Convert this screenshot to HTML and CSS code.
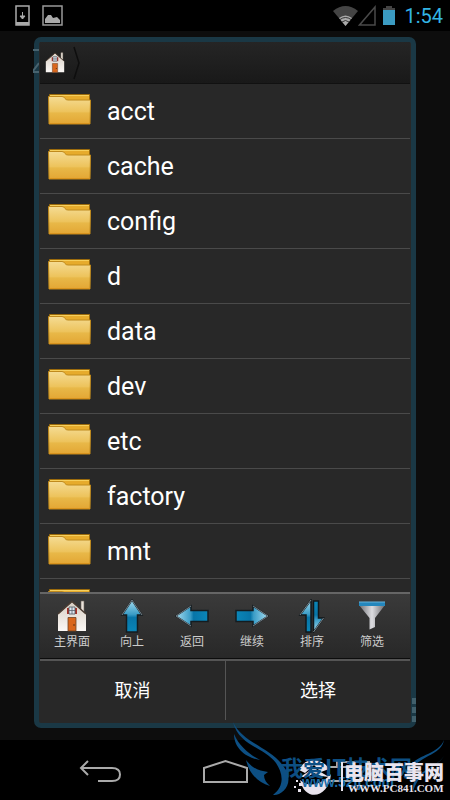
FILE: index.html
```html
<!DOCTYPE html>
<html lang="zh-CN">
<head>
    <meta charset="UTF-8">
    <meta name="viewport" content="width=device-width, initial-scale=1.0">
    <title>File</title>
    <link rel="stylesheet" href="styles.css">
</head>
<body>
    <!-- shared shapes and gradients -->
    <svg class="defs" width="0" height="0" aria-hidden="true">
        <defs>
            <linearGradient id="gold" x1="0" y1="0" x2="0" y2="1">
                <stop offset="0" stop-color="#f5dc94"/>
                <stop offset="0.55" stop-color="#edc35c"/>
                <stop offset="0.6" stop-color="#e8b848"/>
                <stop offset="1" stop-color="#e3a634"/>
            </linearGradient>
            <linearGradient id="wall" x1="0" y1="0" x2="0" y2="1">
                <stop offset="0" stop-color="#d8cfc4"/>
                <stop offset="1" stop-color="#fbf8f5"/>
            </linearGradient>
            <linearGradient id="arrowBlue" x1="0" y1="0" x2="0" y2="1">
                <stop offset="0" stop-color="#a5dcf0"/>
                <stop offset="0.45" stop-color="#3a9cc6"/>
                <stop offset="0.55" stop-color="#0775a8"/>
                <stop offset="1" stop-color="#0a86b8"/>
            </linearGradient>
            <linearGradient id="arrowDown" x1="0" y1="0" x2="0" y2="1">
                <stop offset="0" stop-color="#0a86b8"/>
                <stop offset="0.45" stop-color="#0775a8"/>
                <stop offset="0.6" stop-color="#3a9cc6"/>
                <stop offset="1" stop-color="#a5dcf0"/>
            </linearGradient>
            <linearGradient id="steel" x1="0" y1="0" x2="1" y2="0">
                <stop offset="0" stop-color="#6e6e72"/>
                <stop offset="0.5" stop-color="#dcdce0"/>
                <stop offset="1" stop-color="#6a6a6e"/>
            </linearGradient>
        </defs>
        <symbol id="folder" viewBox="0 0 43 31">
            <path d="M1.500 0.500H41.500V7H1.500z" fill="#e6ab2c" stroke="#9a6a0c" stroke-width="1"/>
            <path d="M2 1.500H41" stroke="#f6cf5c"/>
            <path d="M0.500 2.500 H14 Q16 2.500 17 4.500 Q18 6 20 6 H42.500 L42 30 H1z" fill="url(#gold)" stroke="#c08a1c"/>
            <path d="M1 29.500H42" stroke="#d8921c"/>
        </symbol>
        <symbol id="house" viewBox="0 0 30 32">
            <path d="M24 1h3v11h-3z" fill="#e9e2da" stroke="#71665a" stroke-width="0.600"/>
            <path d="M1 14 L15 2 L29 14 V31 H1z" fill="url(#wall)"/>
            <path d="M1 14 L15 1.500 L29 14" fill="none" stroke="#4b3d33" stroke-width="1.500"/>
            <path d="M10 8h10v6H10z" fill="#a83228"/>
            <path d="M12 7h6v7h-6z" fill="#dce6ef" stroke="#4a5560" stroke-width="0.800"/>
            <path d="M15 7v7M12 10.500h6" stroke="#59636e" stroke-width="0.800"/>
            <path d="M11 17.500h8V31h-8z" fill="#d9661c" stroke="#6d4427" stroke-width="0.800"/>
            <circle cx="17" cy="25" r="0.800" fill="#4b2a10"/>
        </symbol>
        <symbol id="arrow" viewBox="0 0 24 34">
            <path d="M12 1 L22 16 H17.500 V33 H6.500 V16 H2z" fill="url(#arrowBlue)" stroke="#141c20" stroke-width="1.500"/>
            <path d="M12 1 L2 16" stroke="#77828a"/>
            <path d="M12 1 L22 16" stroke="#77828a"/>
        </symbol>
    </svg>

    <header class="status-bar">
        <svg width="15" height="21" viewBox="0 0 15 21"><path d="M1 1h13v19H1z" fill="none" stroke="#aaa" stroke-width="1.500"/><path d="M1 17h13v3H1z" fill="#aaa"/><path d="M7.500 7v7M5 11l2.500 3 2.500-3z" stroke="#aaa" fill="#aaa"/></svg>
        <svg width="21" height="21" viewBox="0 0 21 21"><path d="M1 1h19v19H1z" fill="none" stroke="#999" stroke-width="1.500"/><path d="M3 18v-4l3-4h3l2 3 4-1 3 3v3z" fill="#aaa"/></svg>
        <div class="status-right">
            <svg width="25" height="20" viewBox="0 0 25 20"><path d="M0 5Q12.500-5 25 5L12.500 20z" fill="#444"/><path d="M6 12Q12.500 7 19 12L12.500 20z" fill="#aaa"/><path d="M7 13.500q5.500-4 11 0M9 16q3.500-3 7 0" stroke="#333" fill="none"/></svg>
            <svg width="18" height="21" viewBox="0 0 18 21"><path d="M17 2v18H1.500z" fill="none" stroke="#4a4a4a" stroke-width="1.500"/></svg>
            <svg class="battery" width="14" height="21" viewBox="0 0 14 21"><path d="M4 1h6v2h3v3H1V3h3z" fill="#444"/><path d="M1 5h12v15H1z" fill="#3b9bc2"/></svg>
            <span class="clock">1:54</span>
        </div>
    </header>

    <main class="screen">
        <section class="dialog">
            <svg class="behind-title" width="6" height="26" viewBox="0 0 6 26"><path d="M0 2h6M0 24h6M0 23L6 15" stroke="#48636f" stroke-width="2"/></svg>
            <div class="behind-menu"><i></i><i></i><i></i></div>
            <nav class="path">
                <svg width="20" height="21"><use href="#house"/></svg>
                <svg width="8" height="34" viewBox="0 0 8 34"><path d="M1 1L6 17L1 33" fill="none" stroke="#0e0e0e" stroke-width="1.500"/></svg>
            </nav>
            <ul class="files">
                <li><svg><use href="#folder"/></svg>acct</li>
                <li><svg><use href="#folder"/></svg>cache</li>
                <li><svg><use href="#folder"/></svg>config</li>
                <li><svg><use href="#folder"/></svg>d</li>
                <li><svg><use href="#folder"/></svg>data</li>
                <li><svg><use href="#folder"/></svg>dev</li>
                <li><svg><use href="#folder"/></svg>etc</li>
                <li><svg><use href="#folder"/></svg>factory</li>
                <li><svg><use href="#folder"/></svg>mnt</li>
                <li><svg><use href="#folder"/></svg></li>
            </ul>
            <div class="toolbar">
                <button><svg viewBox="0 0 34 34"><use href="#house" x="2" y="1" width="30" height="32"/></svg>主界面</button>
                <button><svg viewBox="0 0 34 34"><use href="#arrow" x="5" width="24" height="34"/></svg>向上</button>
                <button><svg viewBox="0 0 34 34"><g transform="rotate(-90 17 17)"><use href="#arrow" x="5" width="24" height="34"/></g></svg>返回</button>
                <button><svg viewBox="0 0 34 34"><g transform="rotate(90 17 17)"><use href="#arrow" x="5" width="24" height="34"/></g></svg>继续</button>
                <button><svg viewBox="0 0 34 34"><path d="M16 1V33H11V16H5z" fill="url(#arrowBlue)" stroke="#10181c" stroke-width="1.500"/><path d="M16 1L5 16" stroke="#7d8a91"/><path d="M18.500 2h5v17h5L18.500 33z" fill="url(#arrowDown)" stroke="#10181c" stroke-width="1.500"/><path d="M28.500 19L18.500 33" stroke="#7d8a91"/></svg>排序</button>
                <button><svg viewBox="0 0 34 34"><path d="M4 6H30L20 19V28L14.500 30.500V19z" fill="url(#steel)"/><path d="M4 3h26v4H4z" fill="#2487bd"/><path d="M4 3h26" stroke="#68b4dc"/></svg>筛选</button>
            </div>
            <div class="actions">
                <button>取消</button>
                <button>选择</button>
            </div>
        </section>
    </main>

    <footer class="nav-bar">
        <button aria-label="back"><svg width="46" height="26" viewBox="0 0 46 26"><path d="M10 2L3 9L10 16M3 9H34Q42 9 42 15.500T34 22H20" fill="none" stroke="#aaa" stroke-width="2"/></svg></button>
        <button aria-label="home"><svg width="46" height="26" viewBox="0 0 46 26"><path d="M2 23V9L23.500 2L45 9V23z" fill="none" stroke="#aaa" stroke-width="2"/></svg></button>
        <button aria-label="recent"><svg width="46" height="26" viewBox="0 0 46 26"><path d="M11 7V3H43V17H36M3 8H34V22H3z" fill="none" stroke="#aaa" stroke-width="2"/></svg></button>
    </footer>

    <svg class="watermark" width="220" height="80" viewBox="0 0 220 80">
        <!-- wings -->
        <g fill="#0d4f83">
            <path d="M3 2C13 25 49 29 58 55C61 68 50 76 43 75C56 65 52 52 46 43C34 27 9 26 3 2z"/>
            <path d="M4 14C9 26 20 35 30 40C17 38 4 29 4 14z"/>
            <path d="M16 40C22 48 29 51 38 52L34 55Q34 61 40 66C27 62 19 53 16 40z"/>
            <path d="M214 20C211 37 185 35 180 55C176 34 207 38 214 20z"/>
            <path d="M214 36C207 48 190 48 183 72C181 50 205 50 214 36z"/>
        </g>
        <!-- round logo -->
        <g fill="#e9e4ee">
            <path d="M69 50C74 37 92 37 99 49L91 52L84 45L75 53z"/>
            <path d="M70 57L84 48L99 57L91 56L84 53L77 57z"/>
            <path d="M70 60C80 69 93 63 101 54C99 78 75 83 70 60z"/>
            <path d="M66 60h2v2h-2zM69 63h3v3h-3zM64 66h2v2h-2zM68 69h3v3h-3z"/>
        </g>
        <text class="mark-site" x="51" y="56">我爱IT技术网</text>
        <text class="mark-url" x="72" y="67">www.52ij.com</text>
        <path d="M112 42V71" stroke="#e9e4ee" stroke-width="2"/>
        <text class="mark-name" x="114" y="60">电脑百事网</text>
        <text class="mark-com" x="118" y="72">WWW.PC841.COM</text>
    </svg>
</body>
</html>
```
FILE: styles.css
```css
* {
    box-sizing: border-box;
}

body {
    margin: 0;
    height: 100vh;
    display: flex;
    flex-direction: column;
    position: relative;
    overflow: hidden;
    background: #000;
    color: #fff;
    font-family: Roboto, "Noto Sans CJK SC", sans-serif;
}

svg {
    display: block;
    flex: none;
}

.defs {
    position: absolute;
}

button {
    padding: 0;
    border: none;
    background: none;
    color: inherit;
    font-family: inherit;
    cursor: pointer;
}

.status-bar {
    height: 31px;
    flex: none;
    display: flex;
    align-items: center;
    gap: 12px;
    padding: 0 7px 0 15px;
}

.status-right {
    margin-left: auto;
    display: flex;
    align-items: center;
}

.battery {
    margin: 0 8px 0 6px;
}

.clock {
    font-size: 20px;
    color: #33b5e5;
}

.screen {
    flex: 1;
    min-height: 0;
    display: flex;
    padding: 6px 34px 12px;
    background: #0d0d0d;
}

.dialog {
    flex: 1;
    min-width: 0;
    display: flex;
    flex-direction: column;
    position: relative;
    padding: 0 1px;
    border: 5px solid #1a3845;
    border-radius: 7px;
    background: #282828;
}

.behind-title {
    position: absolute;
    left: -6px;
    top: 6px;
}

.behind-menu {
    position: absolute;
    right: -5px;
    bottom: 1px;
    display: grid;
    gap: 3px;
}

.behind-menu i {
    width: 4px;
    height: 6px;
    background: #41606c;
}

.path {
    height: 42px;
    flex: none;
    display: flex;
    align-items: center;
    gap: 8px;
    padding-left: 5px;
    border-bottom: 1px solid #111;
    background: linear-gradient(#252525, #191919);
}

.files {
    flex: 1;
    min-height: 0;
    margin: 0;
    padding: 0;
    overflow: hidden;
    list-style: none;
}

.files li {
    height: 55px;
    display: flex;
    align-items: center;
    gap: 16px;
    padding-left: 8px;
    border-bottom: 1px solid #4a4a4a;
    font-size: 25px;
}

.files svg {
    width: 43px;
    height: 31px;
    margin-bottom: 3px;
}

.toolbar {
    height: 67px;
    flex: none;
    display: grid;
    grid-template-columns: repeat(6, 1fr);
    padding: 0 8px 0 2px;
    border-top: 2px solid #666;
    border-bottom: 1px solid #0c0c0c;
    background: linear-gradient(#3a3a3a, #282828);
}

.toolbar button {
    display: flex;
    flex-direction: column;
    align-items: center;
    padding-top: 5px;
    font-size: 12px;
    line-height: 18px;
    color: #ccc;
}

.toolbar svg {
    width: 34px;
    height: 34px;
}

.actions {
    height: 64px;
    flex: none;
    display: grid;
    grid-template-columns: 1fr 1fr;
    padding-bottom: 3px;
    border-top: 2px solid #555;
}

.actions button {
    padding-bottom: 3px;
    font-size: 18px;
}

.actions button + button {
    border-left: 1px solid #555;
}

.nav-bar {
    height: 60px;
    flex: none;
    display: flex;
    align-items: center;
    justify-content: center;
    gap: 78px;
    padding-top: 4px;
}

.watermark {
    position: absolute;
    right: 0;
    bottom: 0;
    pointer-events: none;
}

.mark-site {
    font: bold 22px "Noto Sans CJK SC", sans-serif;
    fill: #0d4f83;
}

.mark-url {
    font: bold 14px "Liberation Sans", sans-serif;
    fill: #1b6ca6;
}

.mark-name {
    font: 900 20px "Noto Sans CJK SC", sans-serif;
    fill: #e9e4ee;
}

.mark-com {
    font: bold 11px "Liberation Serif", serif;
    fill: #e9e4ee;
}
```
